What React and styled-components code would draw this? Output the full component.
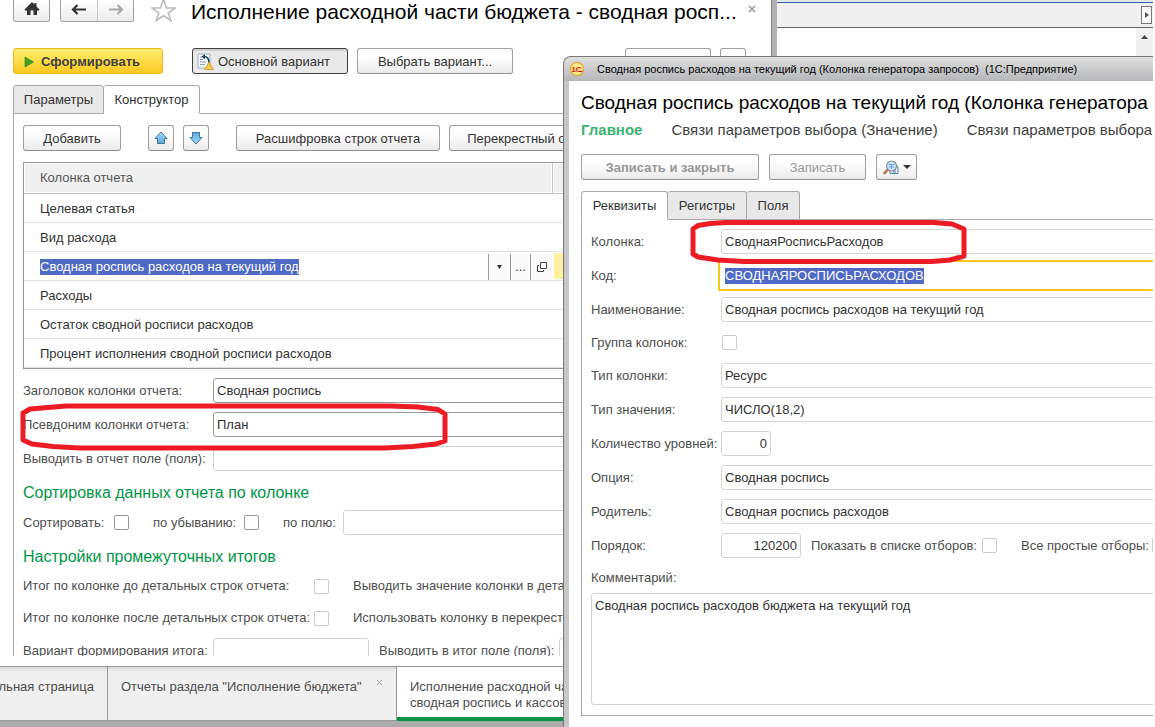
import React from 'react';
import styled, { createGlobalStyle, css } from 'styled-components';

const GlobalStyle = createGlobalStyle`
  * { box-sizing: border-box; }
  body {
    margin: 0;
    background: #fff;
    color: #333;
    font: 13px/16px "Liberation Sans", Arial, sans-serif;
    overflow: hidden;
  }
  button, input, textarea { font: inherit; color: inherit; margin: 0; }
`;

const Desktop = styled.div`
  position: relative;
  display: flex;
  height: 100vh;
  padding-right: 2px;
  overflow: hidden;
`;

/* ---------- shared controls ---------- */

const Button = styled.button`
  display: inline-flex;
  align-items: center;
  justify-content: center;
  gap: 4px;
  flex: none;
  width: ${(p) => p.$width}px;
  height: 26px;
  padding: 2px 0 0;
  border: 1px solid #a0a0a0;
  border-bottom-color: #909090;
  border-radius: 3px;
  background: linear-gradient(#fff 30%, #ebebeb);
  white-space: nowrap;
  font-weight: ${(p) => (p.$bold ? 'bold' : 'normal')};
  &:disabled { color: #999; }
  ${(p) => p.$icon && css`
    padding: 0;
  `}
  ${(p) => p.$primary && css`
    gap: 7px;
    justify-content: flex-start;
    padding-left: 10px;
    border-color: #f0b81c;
    background: linear-gradient(#ffee70, #fbc91f);
    font-weight: bold;
    color: #404040;
  `}
  ${(p) => p.$pressed && css`
    justify-content: flex-start;
    padding-left: 4px;
    border-color: #404040;
    background: #e9e9e9;
    box-shadow: inset 0 2px 1px #cfcfcf;
  `}
`;

const Toolbar = styled.div`
  display: flex;
  gap: ${(p) => p.$gap || 9}px;
`;

const Spacer = styled.span`
  flex: none;
  width: ${(p) => p.$width}px;
`;

const TabList = styled.div`
  display: flex;
  margin-top: 11px;
`;

const Tab = styled.button`
  flex: none;
  width: ${(p) => p.$width}px;
  height: 29px;
  padding: 0;
  border: 1px solid #a8a8a8;
  border-left-width: ${(p) => (p.$first ? 1 : 0)}px;
  border-radius: 3px 3px 0 0;
  border-bottom-color: ${(p) => (p.$active ? '#fff' : '#a8a8a8')};
  background: ${(p) => (p.$active ? '#fff' : '#e9e9e9')};
`;

const TabRest = styled.div`
  flex: 1;
  border-bottom: 1px solid #a8a8a8;
`;

const Label = styled.label`
  flex: none;
  width: ${(p) => (p.$width ? `${p.$width}px` : 'auto')};
  color: #4d4d4d;
  white-space: nowrap;
`;

const TextBox = styled.input`
  flex: ${(p) => (p.$width ? 'none' : '1')};
  min-width: 0;
  width: ${(p) => (p.$width ? `${p.$width}px` : 'auto')};
  height: 25px;
  padding: 0 3px;
  border: 1px solid ${(p) => (p.$dark ? '#999' : '#d4d4d4')};
  border-radius: 3px;
  background: #fff;
  outline: none;
  text-align: ${(p) => (p.$number ? 'right' : 'left')};
`;

const CheckBox = styled.input.attrs({ type: 'checkbox' })`
  appearance: none;
  flex: none;
  width: 15px;
  height: 15px;
  border: 1px solid ${(p) => (p.$dark ? '#999' : '#ccc')};
  border-radius: 2px;
  background: #fff;
`;

const SelectedText = styled.input`
  field-sizing: content;
  height: 16px;
  padding: 0;
  border: 0;
  outline: none;
  background: #4f69c6;
  color: #fff;
`;

const Row = styled.div`
  display: flex;
  align-items: center;
  height: ${(p) => p.$height || 25}px;
`;

/* ---------- report window ---------- */

const ReportWindow = styled.main`
  display: flex;
  flex-direction: column;
  flex: 0 0 777px;
  min-width: 0;
  border-right: 5px solid #b0b2b5;
  box-shadow: inset -1px 0 #808080;
`;

const Header = styled.header`
  display: flex;
  height: 48px;
  padding-left: 13px;
`;

const NavGroup = styled.div`
  display: flex;
  height: 22px;
  margin-right: ${(p) => p.$gap}px;
  border: 1px solid #a0a0a0;
  border-top: 0;
  border-radius: 0 0 3px 3px;
  background: linear-gradient(#fff, #ebebeb);
`;

const NavButton = styled.button`
  display: flex;
  justify-content: center;
  width: ${(p) => p.$width}px;
  padding: 0;
  border: 0;
  background: none;
  & + & { border-left: 1px solid #c8c8c8; }
`;

const Title = styled.h1`
  margin: 0;
  padding-left: 15px;
  font-size: 21px;
  line-height: 24px;
  font-weight: normal;
  color: #000;
  white-space: nowrap;
`;

const CloseMark = styled.button`
  align-self: flex-start;
  padding: 5px 0 0;
  border: 0;
  background: none;
  line-height: 0;
`;

const ReportBar = styled(Toolbar)`
  padding: 0 26px 0 13px;
`;

const ReportTabs = styled(TabList)`
  padding-left: 13px;
`;

const ReportPanel = styled.section`
  flex: 1;
  min-height: 0;
  overflow: hidden;
  margin: 0 0 10px 13px;
  padding: 11px 9px 0;
  border-left: 1px solid #a8a8a8;
`;

const ColumnsTable = styled.table`
  width: 100%;
  margin: 11px 0 9px;
  border: 1px solid #999;
  border-collapse: separate;
  border-spacing: 0;
  table-layout: fixed;
  th {
    height: 31px;
    padding: 0 16px;
    border-bottom: 1px solid #c4c4c4;
    background: #f0f0f0;
    box-shadow: inset 0 0 0 1px #fff;
    color: #555;
    font-weight: normal;
    text-align: left;
  }
  th:first-child { width: 529px; border-right: 1px solid #c4c4c4; }
  td {
    height: 29px;
    padding: 2px 1px 0 16px;
    border-bottom: 1px solid #e2e2e2;
  }
`;

const EditCell = styled.div`
  display: flex;
  align-items: center;
  height: 26px;
`;

const CellTools = styled.div`
  display: flex;
  margin-left: auto;
`;

const CellButton = styled.button`
  display: flex;
  align-items: center;
  justify-content: center;
  width: ${(p) => p.$width}px;
  height: 26px;
  padding: 0;
  border: 0;
  border-left: 1px solid #999;
  background: #fafafa;
`;

const MarkedCell = styled.td`
  background: #fff0a0;
  box-shadow: inset 0 0 0 1px #fff;
`;

const Fields = styled.div`
  display: flex;
  flex-direction: column;
  gap: 9px;
`;

const GroupTitle = styled.h2`
  margin: 12px 0 ${(p) => p.$after}px;
  font-size: 16px;
  line-height: 20px;
  font-weight: normal;
  color: #009646;
`;

const CheckRow = styled(Row)`
  margin-bottom: ${(p) => p.$after}px;
`;

const WindowTabs = styled.nav`
  display: flex;
  height: 55px;
  border-top: 1px solid #999;
  background: #f0f0f0;
`;

const WindowTab = styled.button`
  display: flex;
  align-items: flex-start;
  justify-content: ${(p) => p.$justify || 'space-between'};
  flex: ${(p) => (p.$width ? 'none' : '1')};
  width: ${(p) => (p.$width ? `${p.$width}px` : 'auto')};
  overflow: hidden;
  padding: 12px 13px 0;
  border: 0;
  border-right: 1px solid #999;
  border-bottom: 1px solid #999;
  background: linear-gradient(#d8d8d8, #f0f0f0 5px);
  color: #4d4d4d;
  text-align: left;
  white-space: nowrap;
  ${(p) => p.$active && css`
    background: #fff;
    border-right: 0;
    border-bottom: 4px solid #009646;
  `}
`;

const WindowFoot = styled.div`
  height: 6px;
  background: #ababab;
`;

/* ---------- strip behind the dialog ---------- */

const BackPane = styled.aside`
  flex: 1;
  border-top: 2px solid #e4e8ee;
`;

const BackHeader = styled.div`
  display: flex;
  justify-content: flex-end;
  height: 26px;
  padding: 3px 1px 3px 0;
  border-top: 1px solid #3a62a8;
  border-bottom: 1px solid #666;
  background: #f0f0f0;
`;

const ScrollRight = styled.button`
  display: flex;
  align-items: center;
  justify-content: center;
  width: 11px;
  padding: 0;
  border: 1px solid #777;
  background: #f8f8f8;
`;

const ScrollTrack = styled.div`
  display: flex;
  justify-content: center;
  width: 17px;
  height: 40px;
  margin-left: auto;
  padding-top: 7px;
  background: #f0f0f0;
`;

/* ---------- dialog ---------- */

const Dialog = styled.section`
  position: absolute;
  top: 56px;
  left: 563px;
  right: 2px;
  min-height: calc(100vh - 56px);
  overflow: hidden;
  border-top: 1px solid #777;
  border-left: 1px solid #777;
  border-top-left-radius: 8px;
  background: #c6c7c9;
`;

const DialogTitle = styled.header`
  display: flex;
  align-items: center;
  gap: 12px;
  height: 24px;
  padding-left: 5px;
  background: linear-gradient(#e0e0e0, #b5b6b8);
  color: #000;
  font-size: 11px;
  white-space: pre;
`;

const DialogBody = styled.div`
  margin-left: 5px;
  min-height: calc(100vh - 81px);
  padding: 10px 0 11px 12px;
  background: #fff;
`;

const DialogHeading = styled.h2`
  margin: 0;
  font-size: 19px;
  line-height: 24px;
  font-weight: normal;
  color: #000;
  white-space: nowrap;
`;

const DialogNav = styled.nav`
  display: flex;
  gap: 29px;
  margin: 6px 0 15px;
  font-size: 15px;
  line-height: 18px;
  white-space: nowrap;
`;

const NavLink = styled.a`
  color: ${(p) => (p.$active ? '#3cb371' : '#404040')};
  font-weight: ${(p) => (p.$active ? 'bold' : 'normal')};
  text-decoration: none;
`;

/* the panel runs on past the visible edge of the dialog */
const DialogPanel = styled.div`
  margin-right: -12px;
  padding: 9px 0 10px 9px;
  border-left: 1px solid #a8a8a8;
  border-bottom: 1px solid #a8a8a8;
`;

const FocusFrame = styled.div`
  display: flex;
  align-items: center;
  flex: 1;
  height: 25px;
  padding-left: 4px;
  background: #fff;
  box-shadow: 0 0 0 1px #fff, 0 0 0 3px #fcc520;
`;

const Comment = styled.textarea`
  display: block;
  width: 100%;
  height: 112px;
  margin-top: 7px;
  padding: 4px 3px;
  border: 1px solid #d4d4d4;
  border-radius: 3px;
  outline: none;
  resize: none;
`;

const CommentBlock = styled.div`
  display: flex;
  flex-direction: column;
  margin-top: 12px;
`;

const Pen = styled.svg`
  position: absolute;
  left: ${(p) => p.$left}px;
  top: ${(p) => p.$top}px;
  pointer-events: none;
  fill: none;
  stroke: #ed1c24;
  stroke-width: 5;
  stroke-linejoin: round;
`;

/* ---------- icons ---------- */

const HomeIcon = () => (
  <svg width="16" height="18" viewBox="0 0 16 18">
    <path d="M8 2 L0.5 9.5 L2 11 L3 10.2 V15 H6.5 V10.5 H9.5 V15 H13 V10.2 L14 11 L15.5 9.5 L12.5 6.4 V3 H10.5 V4.5 Z" fill="#333" />
  </svg>
);

const ArrowIcon = ({ color, flip }) => (
  <svg width="16" height="18" viewBox="0 0 16 18" fill="none" stroke={color} strokeWidth="2.2">
    <path d={flip ? 'M1 9.5 H14 M9.5 5 L14 9.5 L9.5 14' : 'M15 9.5 H2 M6.5 5 L2 9.5 L6.5 14'} />
  </svg>
);

const StarIcon = () => (
  <svg width="25" height="23" viewBox="0 0 25 23">
    <path d="M12.5 -1 L15.5 8 H24 L17.2 13 L19.8 20.5 L12.5 15.8 L5.2 20.5 L7.8 13 L1 8 H9.5 Z" fill="#fff" stroke="#bbb" strokeWidth="1.6" />
  </svg>
);

const PlayIcon = () => (
  <svg width="10" height="12" viewBox="0 0 10 12">
    <path d="M1 1 L9.5 6 L1 11 Z" fill="#3aa41c" stroke="#4d8a1a" strokeWidth="0.8" />
  </svg>
);

const VariantIcon = () => (
  <svg width="17" height="18" viewBox="0 0 17 18">
    <path d="M1 1 H13 V15 H1 Z" fill="#f4f8fb" stroke="#9db4c4" />
    <path d="M3 4 H5 M3 6.5 H6 M3 9 H9 M3 11.5 H8" stroke="#8aa3b5" />
    <path d="M7 3.5 C11 3.5 12 6 12 10" fill="none" stroke="#1d4460" strokeWidth="1.6" />
    <path d="M4.5 3.5 L8 1 V6.5 Z" fill="#1d4460" />
    <path d="M12 9 L16.5 16.5 H7.5 Z" fill="#f2c84a" stroke="#c89a28" strokeWidth="0.8" />
  </svg>
);

const MoveIcon = ({ down }) => (
  <svg width="14" height="14" viewBox="0 0 14 14">
    <defs>
      <linearGradient id="moveFill" x1="0" y1="0" x2="0" y2="1">
        <stop offset="0" stopColor="#a8dcf8" />
        <stop offset="1" stopColor="#58a8dc" />
      </linearGradient>
    </defs>
    <path
      d="M7 1 L13 7.5 H10.5 V12.5 H3.5 V7.5 H1 Z"
      transform={down ? 'rotate(180 7 7)' : undefined}
      fill="url(#moveFill)"
      stroke="#3f7898"
      strokeLinejoin="round"
    />
  </svg>
);

const CloseIcon = ({ size }) => (
  <svg width={size} height={size} viewBox="0 0 8 8" fill="none" stroke="#999" strokeWidth={size > 7 ? 1.6 : 1}>
    <path d="M1 1 L7 7 M7 1 L1 7" />
  </svg>
);

const CaretIcon = ({ width = 5 }) => (
  <svg width={width} height="4" viewBox="0 0 8 4" preserveAspectRatio="none">
    <path d="M0 0 H8 L4 4 Z" fill="#333" />
  </svg>
);

const OpenIcon = () => (
  <svg width="10" height="10" viewBox="0 0 10 10" fill="none" stroke="#444">
    <path d="M3.5 0.5 H9.5 V6.5 H3.5 Z M2 3.5 H0.5 V9.5 H6.5 V8" />
  </svg>
);

const FindIcon = () => (
  <svg width="16" height="15" viewBox="0 0 16 15" fill="none">
    <path d="M7 6.5 H15 V13.5 H7 Z" fill="#e4f2f7" stroke="#4a8798" />
    <path d="M10 10 H13 M10 12 H13" stroke="#4a8798" />
    <path d="M5 9.5 L1.5 13" stroke="#b0805c" strokeWidth="2.6" strokeLinecap="round" />
    <circle cx="8.5" cy="6" r="5" fill="#c9e3fa" stroke="#8a8f98" strokeWidth="1.2" />
    <path d="M5.5 4.5 H11.5 M6 7 H11 M8.5 4.5 V9" stroke="#6aa1dc" />
  </svg>
);

const LogoIcon = () => (
  <svg width="16" height="16" viewBox="0 0 16 16">
    <circle cx="8" cy="8" r="6.5" fill="#ffe98a" stroke="#dca82c" strokeWidth="1.2" />
    <text x="7.5" y="11" textAnchor="middle" fontSize="8" fontWeight="bold" fill="#d8141c">1С</text>
    <path d="M9 10.5 H13.5" stroke="#d8141c" strokeWidth="1.2" />
  </svg>
);

/* ---------- page ---------- */

const beforeEdited = ['Целевая статья', 'Вид расхода'];
const afterEdited = ['Расходы', 'Остаток сводной росписи расходов', 'Процент исполнения сводной росписи расходов'];

const PlainRow = ({ text }) => (
  <tr>
    <td>{text}</td>
    <td />
  </tr>
);

const Field = ({ id, label, value = '', labelWidth, ...box }) => (
  <Row>
    <Label htmlFor={id} $width={labelWidth}>{label}</Label>
    <TextBox id={id} defaultValue={value} {...box} />
  </Row>
);

function Report() {
  return (
    <ReportWindow>
      <Header>
        <NavGroup $gap={10}>
          <NavButton $width={35} aria-label="Домой"><HomeIcon /></NavButton>
        </NavGroup>
        <NavGroup $gap={17}>
          <NavButton $width={36} aria-label="Назад"><ArrowIcon color="#333" /></NavButton>
          <NavButton $width={36} aria-label="Вперед"><ArrowIcon color="#aaa" flip /></NavButton>
        </NavGroup>
        <StarIcon />
        <Title>Исполнение расходной части бюджета - сводная росп...</Title>
        <Spacer $width={11} />
        <CloseMark aria-label="Закрыть"><CloseIcon size={8} /></CloseMark>
      </Header>
      <ReportBar>
        <Button $width={150} $primary><PlayIcon />Сформировать</Button>
        <Spacer $width={11} />
        <Button $width={156} $pressed><VariantIcon />Основной вариант</Button>
        <Button $width={156}>Выбрать вариант...</Button>
        <Spacer $width={94} />
        <Button $width={86} aria-label="Еще" />
        <Button $width={26}>?</Button>
      </ReportBar>
      <ReportTabs>
        <Tab $first $width={91}>Параметры</Tab>
        <Tab $active $width={96}>Конструктор</Tab>
        <TabRest />
      </ReportTabs>
      <ReportPanel>
        <Toolbar>
          <Button $width={98}>Добавить</Button>
          <Spacer $width={9} />
          <Button $icon $width={26} aria-label="Вверх"><MoveIcon /></Button>
          <Button $icon $width={26} aria-label="Вниз"><MoveIcon down /></Button>
          <Spacer $width={9} />
          <Button $width={204}>Расшифровка строк отчета</Button>
          <Button $width={160}>Перекрестный отчет</Button>
        </Toolbar>
        <ColumnsTable>
          <thead>
            <tr><th>Колонка отчета</th><th /></tr>
          </thead>
          <tbody>
            {beforeEdited.map((t) => <PlainRow key={t} text={t} />)}
            <tr>
              <td>
                <EditCell>
                  <SelectedText aria-label="Колонка отчета" defaultValue="Сводная роспись расходов на текущий год" />
                  <CellTools>
                    <CellButton $width={22} aria-label="Список"><CaretIcon /></CellButton>
                    <CellButton $width={20}>...</CellButton>
                    <CellButton $width={22} aria-label="Открыть"><OpenIcon /></CellButton>
                  </CellTools>
                </EditCell>
              </td>
              <MarkedCell />
            </tr>
            {afterEdited.map((t) => <PlainRow key={t} text={t} />)}
          </tbody>
        </ColumnsTable>
        <Fields>
          <Field id="caption" label="Заголовок колонки отчета:" value="Сводная роспись" labelWidth={190} $dark />
          <Field id="alias" label="Псевдоним колонки отчета:" value="План" labelWidth={190} $dark />
          <Field id="output" label="Выводить в отчет поле (поля):" labelWidth={190} />
        </Fields>
        <GroupTitle $after={7}>Сортировка данных отчета по колонке</GroupTitle>
        <Row>
          <Label htmlFor="sort" $width={91}>Сортировать:</Label>
          <CheckBox id="sort" $dark />
          <Spacer $width={24} />
          <Label htmlFor="desc" $width={91}>по убыванию:</Label>
          <CheckBox id="desc" $dark />
          <Spacer $width={24} />
          <Label htmlFor="by" $width={60}>по полю:</Label>
          <TextBox id="by" />
        </Row>
        <GroupTitle $after={11}>Настройки промежуточных итогов</GroupTitle>
        <CheckRow $height={16} $after={16}>
          <Label htmlFor="before" $width={291}>Итог по колонке до детальных строк отчета:</Label>
          <CheckBox id="before" />
          <Spacer $width={24} />
          <Label>Выводить значение колонки в детальных строках</Label>
        </CheckRow>
        <CheckRow $height={16} $after={12}>
          <Label htmlFor="after" $width={291}>Итог по колонке после детальных строк отчета:</Label>
          <CheckBox id="after" />
          <Spacer $width={24} />
          <Label>Использовать колонку в перекрестном отчете</Label>
        </CheckRow>
        <Row>
          <Label htmlFor="kind" $width={190}>Вариант формирования итога:</Label>
          <TextBox id="kind" $width={156} />
          <Spacer $width={10} />
          <Label htmlFor="total" $width={180}>Выводить в итог поле (поля):</Label>
          <TextBox id="total" />
        </Row>
      </ReportPanel>
      <WindowTabs>
        <WindowTab $width={108} $justify="flex-end">Начальная страница</WindowTab>
        <WindowTab $width={289}>Отчеты раздела "Исполнение бюджета"<CloseIcon size={7} /></WindowTab>
        <WindowTab $active>Исполнение расходной части бюджета -<br />сводная роспись и кассовые выплаты</WindowTab>
      </WindowTabs>
      <WindowFoot />
    </ReportWindow>
  );
}

function ColumnDialog() {
  return (
    <Dialog>
      <DialogTitle>
        <LogoIcon />
        {'Сводная роспись расходов на текущий год (Колонка генератора запросов)  (1С:Предприятие)'}
      </DialogTitle>
      <DialogBody>
        <DialogHeading>Сводная роспись расходов на текущий год (Колонка генератора запросов)</DialogHeading>
        <DialogNav>
          <NavLink href="#main" $active>Главное</NavLink>
          <NavLink href="#value">Связи параметров выбора (Значение)</NavLink>
          <NavLink href="#links">Связи параметров выбора</NavLink>
        </DialogNav>
        <Toolbar $gap={10}>
          <Button $width={178} $bold disabled>Записать и закрыть</Button>
          <Button $width={97} disabled>Записать</Button>
          <Button $icon $width={41} aria-label="Найти"><FindIcon /><CaretIcon width={8} /></Button>
        </Toolbar>
        <TabList>
          <Tab $first $active $width={87}>Реквизиты</Tab>
          <Tab $width={79}>Регистры</Tab>
          <Tab $width={53}>Поля</Tab>
          <TabRest />
        </TabList>
        <DialogPanel>
          <Fields>
            <Field id="column" label="Колонка:" value="СводнаяРосписьРасходов" labelWidth={130} />
            <Row>
              <Label htmlFor="code" $width={130}>Код:</Label>
              <FocusFrame><SelectedText id="code" defaultValue="СВОДНАЯРОСПИСЬРАСХОДОВ" /></FocusFrame>
            </Row>
            <Field id="name" label="Наименование:" value="Сводная роспись расходов на текущий год" labelWidth={130} />
            <Row $height={23}>
              <Label htmlFor="group" $width={131}>Группа колонок:</Label>
              <CheckBox id="group" />
            </Row>
            <Field id="coltype" label="Тип колонки:" value="Ресурс" labelWidth={130} />
            <Field id="valtype" label="Тип значения:" value="ЧИСЛО(18,2)" labelWidth={130} />
            <Field id="levels" label="Количество уровней:" value="0" labelWidth={130} $width={50} $number />
            <Field id="option" label="Опция:" value="Сводная роспись" labelWidth={130} />
            <Field id="parent" label="Родитель:" value="Сводная роспись расходов" labelWidth={130} />
            <Row>
              <Label htmlFor="order" $width={130}>Порядок:</Label>
              <TextBox id="order" defaultValue="120200" $width={80} $number />
              <Spacer $width={10} />
              <Label htmlFor="filters" $width={171}>Показать в списке отборов:</Label>
              <CheckBox id="filters" />
              <Spacer $width={24} />
              <Label htmlFor="simple" $width={131}>Все простые отборы:</Label>
              <CheckBox id="simple" />
            </Row>
          </Fields>
          <CommentBlock>
            <Label htmlFor="comment">Комментарий:</Label>
            <Comment id="comment" defaultValue="Сводная роспись расходов бюджета на текущий год" />
          </CommentBlock>
        </DialogPanel>
      </DialogBody>
    </Dialog>
  );
}

export default function App() {
  return (
    <Desktop>
      <GlobalStyle />
      <Report />
      <BackPane>
        <BackHeader>
          <ScrollRight aria-label="Вправо">
            <svg width="4" height="6"><path d="M0 0 L4 3 L0 6 Z" fill="#555" /></svg>
          </ScrollRight>
        </BackHeader>
        <ScrollTrack>
          <svg width="7" height="4"><path d="M3.5 0 L7 4 H0 Z" fill="#444" /></svg>
        </ScrollTrack>
      </BackPane>
      <ColumnDialog />
      <Pen $left={18} $top={400} width="434" height="52">
        <path d="M7 12 L12 9 L30 7.5 L48 6 H372 L400 7 L420 9.5 L427 14 V41 L418 44 L395 46.5 L367 48 H62 L35 46.5 L14 44 L5 40 V13 Z" />
      </Pen>
      <Pen $left={688} $top={216} width="284" height="50">
        <path d="M5 13 L10 9.5 L22 7.5 L38 6.5 H246 L264 8 L276 13 V40 L262 44 L244 45.5 H56 L30 44 L10 41 L5 38 Z" />
      </Pen>
    </Desktop>
  );
}
